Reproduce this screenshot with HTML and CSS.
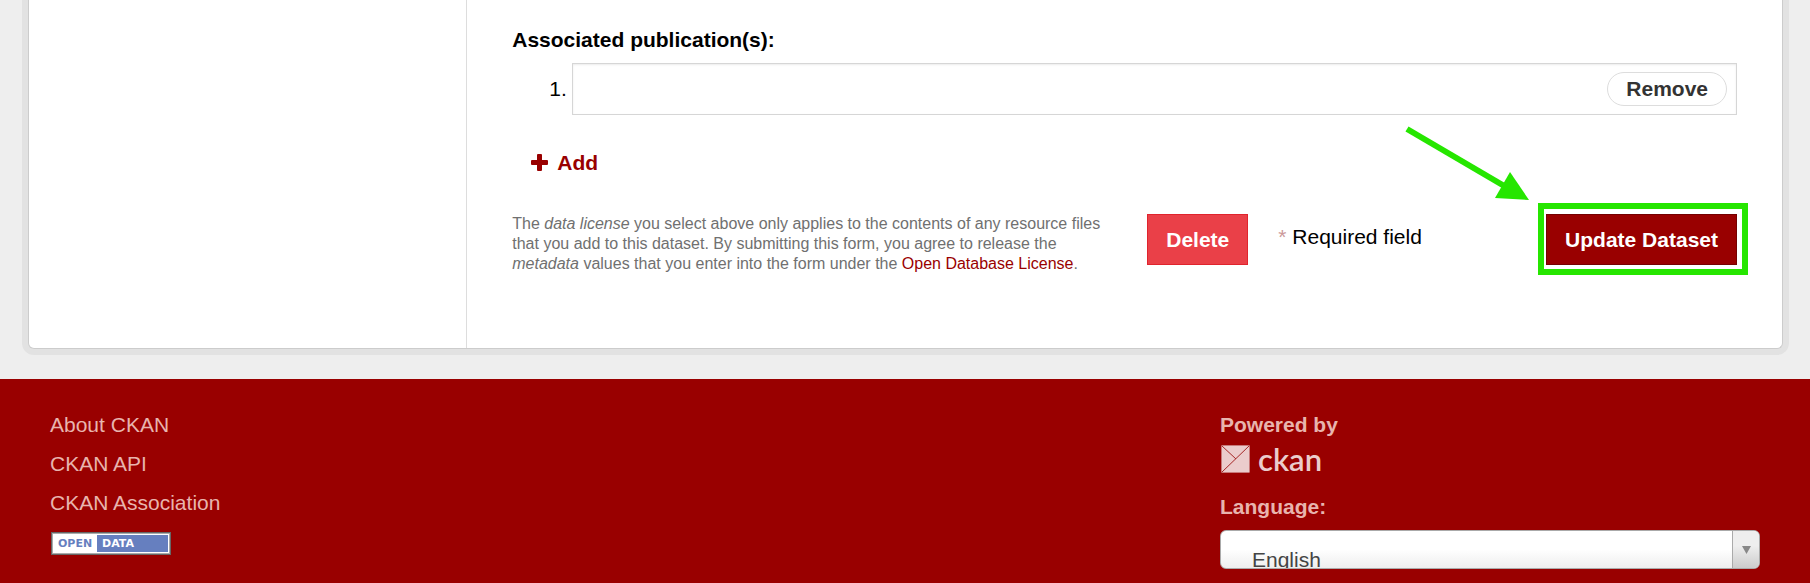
FILE: index.html
```html
<!DOCTYPE html>
<html lang="en">
<head>
<meta charset="utf-8">
<meta name="viewport" content="width=device-width, initial-scale=1">
<title>Update Dataset - CKAN</title>
<link rel="stylesheet" href="styles.css">
</head>
<body>
<main class="panel">
  <aside class="sidebar"></aside>
  <form class="form">
    <label class="field-label" for="publication">Associated publication(s):</label>
    <ol class="publications">
      <li class="publication">
        <span class="number">1.</span>
        <div class="publication-box">
          <input class="text-input" id="publication" type="text">
          <button class="remove" type="button">Remove</button>
        </div>
      </li>
    </ol>
    <button class="add" type="button">
      <svg class="plus" viewBox="0 0 17 19" aria-hidden="true"><path d="M7 0h3q1 0 1 1v5h5q1 0 1 1v3q0 1-1 1h-5v5q0 1-1 1H7q-1 0-1-1v-5H1q-1 0-1-1V7q0-1 1-1h5V1q0-1 1-1z"/></svg>
      Add
    </button>
    <div class="actions">
      <p class="license">The <em>data license</em> you select above only applies to the contents of any resource files<br>that you add to this dataset. By submitting this form, you agree to release the<br><em>metadata</em> values that you enter into the form under the <a class="license-link" href="#">Open Database License</a>.</p>
      <button class="btn btn-danger" type="button">Delete</button>
      <p class="required"><span class="star">*</span> Required field</p>
      <div class="submit">
        <button class="btn btn-primary" type="submit">Update Dataset</button>
        <span class="highlight"></span>
        <svg class="arrow" viewBox="0 0 125 77" aria-hidden="true"><path d="M3 4 102 62" stroke-width="6"/><path class="arrow-head" d="M106 47 125 75 91 73z"/></svg>
      </div>
    </div>
  </form>
</main>
<footer class="footer">
  <nav class="links">
    <a href="#">About CKAN</a>
    <a href="#">CKAN API</a>
    <a href="#">CKAN Association</a>
    <a class="badge" href="#"><span class="badge-open">OPEN</span><span class="badge-data">DATA</span></a>
  </nav>
  <div class="attribution">
    <strong>Powered by</strong>
    <a class="logo" href="#">
      <svg class="logo-mark" viewBox="0 0 29 28" aria-hidden="true"><rect width="29" height="28" rx="1"/><path d="M1 27 28 1M1 1l14 13"/></svg>
      <span>ckan</span>
    </a>
    <label class="language-label" for="language">Language:</label>
    <div class="select-box">
      <select class="language" id="language"><option>English</option></select>
      <span class="select-arrow"><svg viewBox="0 0 9 8" aria-hidden="true"><path d="M0 0h9L4.500 8z"/></svg></span>
    </div>
  </div>
</footer>
</body>
</html>
```
FILE: styles.css
```css
* {
  box-sizing: border-box;
}

body {
  margin: 0;
  background: #eee;
  color: #000;
  font: 21px/30px "Liberation Sans", Arial, sans-serif;
}

button,
input,
select {
  font: inherit;
}

a {
  color: inherit;
  text-decoration: none;
}

p {
  margin: 0;
}

.panel {
  display: flex;
  margin: 0 27px 30px 28px;
  background: #fff;
  border: 1px solid #ccc;
  border-top: 0;
  border-radius: 0 0 6px 6px;
  box-shadow: 0 0 0 6px #e2e2e2;
}

.sidebar {
  flex: 0 0 25%;
  border-right: 1px solid #ddd;
}

.form {
  flex: 1;
  padding: 25px 45px 74px;
}

.field-label {
  display: block;
  font-weight: bold;
}

.publications {
  margin: 8px 0 33px;
  padding: 0 0 0 37px;
  list-style: none;
}

.publication {
  display: flex;
  align-items: center;
  gap: 5px;
}

.publication-box {
  position: relative;
  flex: 1;
}

.text-input {
  display: block;
  width: 100%;
  height: 52px;
  padding: 0 140px 0 10px;
  border: 1px solid #d6d6d6;
  border-radius: 0;
  background: #fff;
  box-shadow: inset 0 1px 2px rgba(0, 0, 0, 0.08);
}

.remove {
  position: absolute;
  top: 9px;
  right: 10px;
  height: 34px;
  padding: 0 18px;
  border: 1px solid #ddd;
  border-radius: 17px;
  background: #fff;
  color: #333;
  font-weight: bold;
  line-height: 30px;
}

.add {
  display: flex;
  align-items: center;
  gap: 9px;
  margin-left: 19px;
  padding: 0;
  border: 0;
  background: none;
  color: #900;
  font-weight: bold;
  line-height: 30px;
}

.plus {
  width: 17px;
  height: 19px;
  fill: #900;
}

.actions {
  display: flex;
  align-items: flex-start;
  margin-top: 36px;
}

.license {
  flex: 0 0 635px;
  color: #707070;
  font-size: 16px;
  line-height: 20px;
}

.license-link {
  color: #900;
}

.btn {
  height: 51px;
  padding: 0 18px;
  border: 1px solid #e0242d;
  border-radius: 0;
  background: #ea4048;
  color: #fff;
  font-weight: bold;
  line-height: 30px;
}

.btn-primary {
  border-color: #750000;
  background: #900;
}

.required {
  margin: 8px 0 0 30px;
}

.star {
  color: #c99;
}

.submit {
  position: relative;
  margin-left: auto;
}

.highlight {
  position: absolute;
  inset: -11px -11px -10px -8px;
  border: 6px solid #26e600;
  pointer-events: none;
}

.arrow {
  position: absolute;
  top: -89px;
  right: 208px;
  width: 125px;
  height: 77px;
  stroke: #26e600;
  pointer-events: none;
}

.arrow-head {
  fill: #26e600;
  stroke: none;
}

.footer {
  display: grid;
  grid-template-columns: 13fr 6fr;
  padding: 31px 50px 14px;
  background: #900;
  color: #e8b4ae;
}

.links {
  display: flex;
  flex-direction: column;
  align-items: flex-start;
  gap: 9px;
}

.badge {
  display: flex;
  width: 120px;
  height: 23px;
  margin: 5px 0 0 1px;
  padding: 2px;
  border: 1px solid #666;
  background: #fff;
  box-shadow: inset 0 0 0 1px #aaa;
  font: bold 11px/17px "DejaVu Sans", sans-serif;
}

.badge-open {
  width: 43px;
  padding-left: 4px;
  color: #667fbf;
}

.badge-data {
  flex: 1;
  padding-left: 5px;
  background: #667fbf;
  color: #fff;
}

.attribution {
  display: flex;
  flex-direction: column;
}

.logo {
  display: flex;
  align-items: center;
  gap: 8px;
  height: 28px;
  margin: 5px 0 19px 1px;
  color: #ebcccc;
  font: 600 31px/26px Lato, sans-serif;
}

.logo-mark {
  width: 29px;
  height: 28px;
  fill: #ebcccc;
  stroke: #a62828;
}

.language-label {
  font-weight: bold;
}

.select-box {
  position: relative;
  margin-top: 8px;
}

.language {
  display: block;
  appearance: none;
  width: 100%;
  height: 39px;
  padding: 14px 40px 0 31px;
  border: 1px solid #aaa;
  border-radius: 6px;
  background: linear-gradient(#fff 50%, #eee);
  color: #444;
}

.select-arrow {
  position: absolute;
  top: 1px;
  right: 1px;
  bottom: 1px;
  display: grid;
  place-items: center;
  width: 27px;
  border-left: 1px solid #aaa;
  border-radius: 0 5px 5px 0;
  background: linear-gradient(#eee 40%, #ccc);
  pointer-events: none;
}

.select-arrow svg {
  width: 9px;
  height: 8px;
  fill: #888;
}
```
